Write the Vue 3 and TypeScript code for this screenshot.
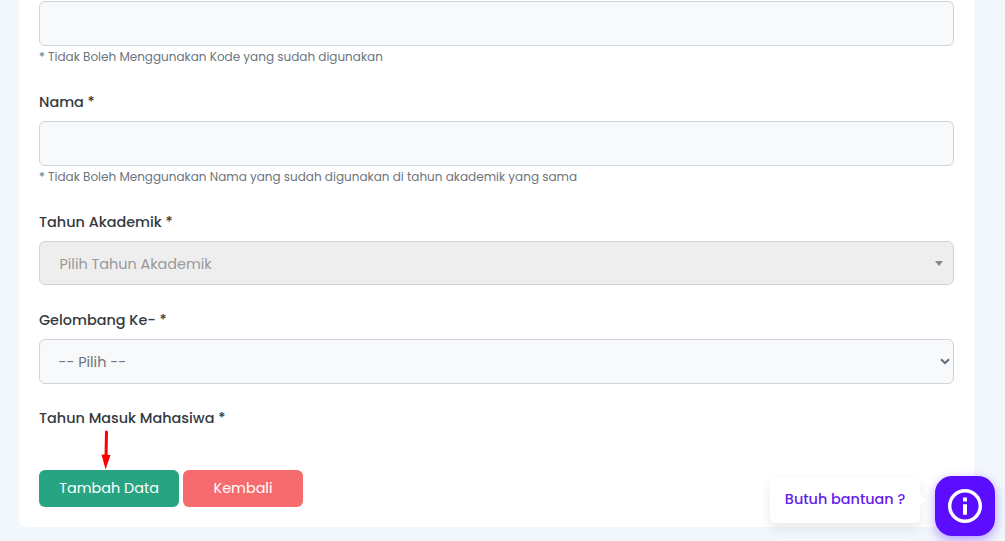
<script setup lang="ts">
interface Field {
  id: string
  label?: string
  hint?: string
  kind: 'input' | 'picker' | 'select' | 'none'
  text?: string
}

const fields: Field[] = [
  { id: 'kode', kind: 'input', hint: '* Tidak Boleh Menggunakan Kode yang sudah digunakan' },
  { id: 'nama', label: 'Nama *', kind: 'input', hint: '* Tidak Boleh Menggunakan Nama yang sudah digunakan di tahun akademik yang sama' },
  { id: 'tahun', label: 'Tahun Akademik *', kind: 'picker', text: 'Pilih Tahun Akademik' },
  { id: 'gelombang', label: 'Gelombang Ke- *', kind: 'select', text: '-- Pilih --' },
  { id: 'masuk', label: 'Tahun Masuk Mahasiwa *', kind: 'none' },
]
</script>

<template>
  <main class="page">
    <form class="card" @submit.prevent>
      <div v-for="f in fields" :key="f.id" class="group" :class="f.id">
        <label v-if="f.label" class="label"><span>{{ f.label }}</span></label>
        <div v-if="f.kind !== 'none'" class="control" :class="f.kind">
          <span class="value">{{ f.text }}</span>
          <svg v-if="f.kind === 'picker'" class="caret" width="8" height="5" viewBox="0 0 8 5"><path d="M0 0h8L4 5z" fill="#888" /></svg>
          <svg v-if="f.kind === 'select'" class="chevron" width="10" height="7" viewBox="0 0 10 7"><path d="M1 1.2l4 4 4-4" fill="none" stroke="#5f6a75" stroke-width="2" /></svg>
        </div>
        <small v-if="f.hint" class="hint"><span>{{ f.hint }}</span></small>
      </div>
      <div class="actions">
        <button class="btn save" type="button"><span>Tambah Data</span></button>
        <button class="btn back" type="button"><span>Kembali</span></button>
      </div>
    </form>
    <svg class="pointer" width="12" height="40" viewBox="0 0 12 40">
      <path d="M6.5 2L6 27" stroke="#f00" stroke-width="3" stroke-linecap="round" />
      <path d="M1.5 24.5L10.5 25 5.6 39.5z" fill="#f00" />
    </svg>
    <aside class="help">
      <div class="bubble"><span>Butuh bantuan ?</span></div>
      <div class="help-btn">
        <svg width="34" height="34" viewBox="0 0 34 34">
          <circle cx="17" cy="17" r="15.3" fill="none" stroke="#fff" stroke-width="3.4" />
          <path d="M15 8.5h4v4h-4zM15 15.3h4v10.5h-4z" fill="#fff" />
        </svg>
      </div>
    </aside>
  </main>
</template>

<style>
body {
  margin: 0;
  overflow: hidden;
}
</style>

<style scoped>
.page {
  position: relative;
  box-sizing: border-box;
  height: 541px;
  padding: 0 31px 14px 19px;
  overflow: hidden;
  background: #f2f7fb;
  font-family: Poppins, Inter, "Open Sans", sans-serif;
  color: #343a40;
}
.card {
  box-sizing: border-box;
  height: 527px;
  padding: 1px 20px 20px;
  border-radius: 0 0 8px 8px;
  background: #fff;
}
.group {
  box-sizing: border-box;
}
.kode { height: 90px; }
.nama { height: 120px; }
.tahun, .gelombang { height: 98px; }
.masuk { height: 63px; }
.label {
  display: block;
  height: 22px;
  padding-bottom: 8px;
  font-size: 14.4px;
  font-weight: 500;
  line-height: 22px;
  white-space: nowrap;
}
.control {
  display: flex;
  align-items: center;
  justify-content: space-between;
  box-sizing: border-box;
  height: 45px;
  padding: 0 10px 0 19px;
  border: 1px solid #ced4da;
  border-radius: 6px;
  background: #f8f9fb;
  font-size: 14.4px;
  color: #6c757d;
  white-space: nowrap;
}
.value {
  padding-top: 2px;
}
.picker {
  height: 44px;
  padding-left: 19.5px;
  background: #eee;
  color: #999;
}
.select {
  padding-right: 3px;
  padding-left: 18.5px;
}
.hint {
  display: block;
  height: 22px;
  font-size: 12px;
  line-height: 22px;
  color: #6c757d;
  white-space: nowrap;
}
.actions {
  display: flex;
  gap: 4px;
}
.btn {
  width: 140px;
  height: 37px;
  padding: 0;
  border: 0;
  border-radius: 6px;
  background: #28a483;
  color: #fff;
  font-family: inherit;
  font-size: 14.4px;
  white-space: nowrap;
}
.back {
  width: 120px;
  background: #f66b6d;
}
.pointer {
  position: absolute;
  left: 100px;
  top: 430px;
}
.help {
  position: absolute;
  top: 476px;
  right: 10px;
  display: flex;
  gap: 15px;
}
.bubble {
  position: relative;
  box-sizing: border-box;
  width: 150px;
  height: 45px;
  margin-top: 2px;
  border-radius: 5px;
  background: #fff;
  box-shadow: 0 5px 12px rgba(0, 0, 0, 0.09);
  color: #6420ed;
  font-size: 14.4px;
  font-weight: 500;
  line-height: 43px;
  text-align: center;
  white-space: nowrap;
}
.bubble::after {
  position: absolute;
  top: 17px;
  right: -4px;
  width: 9px;
  height: 9px;
  border-radius: 1px;
  background: #fff;
  content: "";
  transform: rotate(45deg);
}
.help-btn {
  display: flex;
  align-items: center;
  justify-content: center;
  width: 60px;
  height: 60px;
  border-radius: 17px;
  background: #5b0eff;
  box-shadow: 0 4px 12px rgba(91, 14, 255, 0.4);
}
</style>
